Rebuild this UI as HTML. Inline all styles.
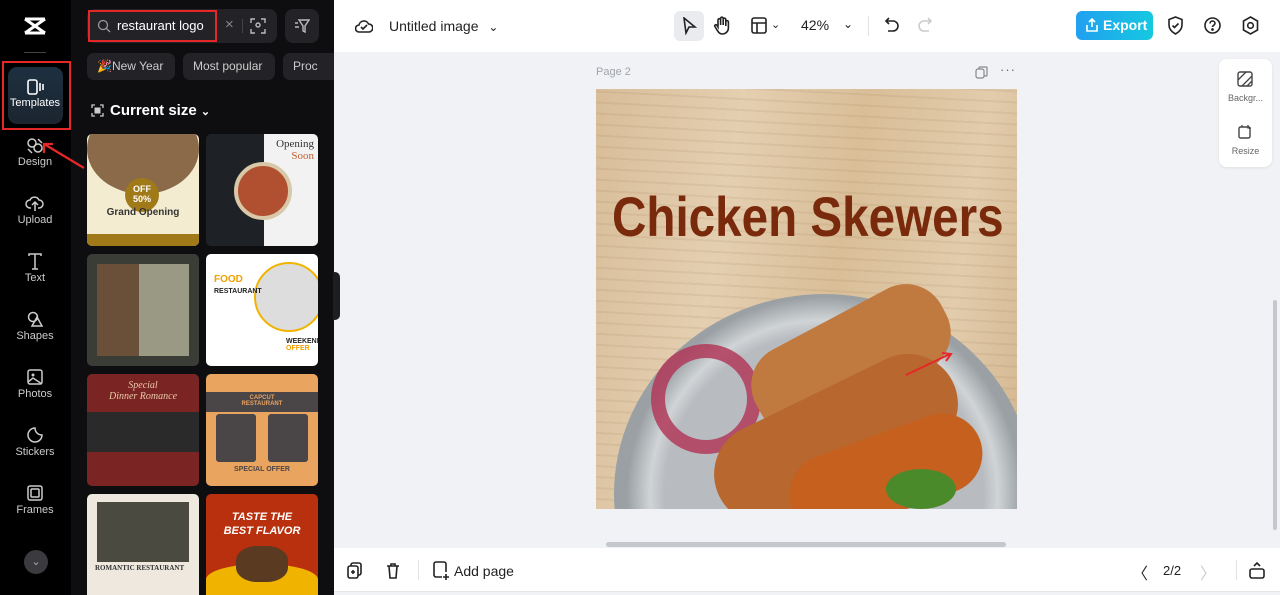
<!DOCTYPE html>
<html><head><meta charset="utf-8"><style>
*{margin:0;padding:0;box-sizing:border-box}
html,body{width:1280px;height:595px;overflow:hidden}
body{font-family:"Liberation Sans",sans-serif;background:#f0f2f5;position:relative}
.abs{position:absolute}
.side{left:0;top:0;width:71px;height:595px;background:#000}
.nav{position:absolute;left:0;width:70px;text-align:center;color:#ccc;font-size:11px}
.nav svg{display:block;margin:0 auto 2px}
.panel{left:71px;top:0;width:263px;height:595px;background:#0e0e10}
.chip{position:absolute;top:53px;height:27px;border-radius:7px;background:#232327;color:#ccc;font-size:12px;line-height:27px;padding:0 10px;white-space:nowrap;overflow:hidden}
.tpl{position:absolute;width:112px;height:112px;border-radius:5px;overflow:hidden}
.ico{position:absolute;stroke:#222;fill:none;stroke-width:1.6}
</style></head><body>
<div class="abs side"></div>
<svg class="abs" style="left:23px;top:17px" width="24" height="18" viewBox="0 0 24 18"><path d="M2 2l20 14M22 2L2 16M2 2h20M2 16h20" stroke="#fff" stroke-width="3" fill="none" stroke-linejoin="round"/></svg>
<div class="abs" style="left:24px;top:52px;width:22px;height:1px;background:#444"></div>
<div class="abs" style="left:2px;top:61px;width:69px;height:69px;border:2px solid #e52727"></div>
<div class="abs" style="left:8px;top:67px;width:55px;height:57px;border-radius:9px;background:linear-gradient(#1d3040,#1c2530)"></div>
<div class="nav" style="top:79px;color:#fff;font-size:11px"><svg width="18" height="16" viewBox="0 0 18 16"><rect x="2" y="1" width="9" height="14" rx="2" stroke="#fff" stroke-width="1.6" fill="none"/><path d="M14 4v8M17 5v6" stroke="#fff" stroke-width="1.6"/></svg>Templates</div>
<div class="nav" style="top:137px"><svg width="18" height="17" viewBox="0 0 18 17"><circle cx="6" cy="6" r="4" stroke="#ccc" stroke-width="1.5" fill="none"/><circle cx="12" cy="11" r="4" stroke="#ccc" stroke-width="1.5" fill="none"/><path d="M12 2l4 4M2 12l4 4" stroke="#ccc" stroke-width="1.5"/></svg>Design</div>
<div class="nav" style="top:195px"><svg width="20" height="17" viewBox="0 0 20 17"><path d="M6 13H5a4 4 0 010-8 5 5 0 019 0 4 4 0 010 8h-1M10 16V8M7 10l3-3 3 3" stroke="#ccc" stroke-width="1.5" fill="none"/></svg>Upload</div>
<div class="nav" style="top:253px"><svg width="18" height="17" viewBox="0 0 18 17"><path d="M3 3V1h12v2M9 1v15M6 16h6" stroke="#ccc" stroke-width="1.5" fill="none"/></svg>Text</div>
<div class="nav" style="top:311px"><svg width="18" height="17" viewBox="0 0 18 17"><circle cx="7" cy="6" r="4.5" stroke="#ccc" stroke-width="1.5" fill="none"/><path d="M11 6l5 9H6z" stroke="#ccc" stroke-width="1.5" fill="none"/></svg>Shapes</div>
<div class="nav" style="top:369px"><svg width="18" height="17" viewBox="0 0 18 17"><rect x="2" y="1" width="14" height="14" rx="2" stroke="#ccc" stroke-width="1.5" fill="none"/><circle cx="7" cy="6" r="1.5" fill="#ccc"/><path d="M2 13l5-4 9 6" stroke="#ccc" stroke-width="1.5" fill="none"/></svg>Photos</div>
<div class="nav" style="top:427px"><svg width="18" height="17" viewBox="0 0 18 17"><path d="M9 1a7 7 0 107 7c-4 0-7-3-7-7z" stroke="#ccc" stroke-width="1.5" fill="none"/></svg>Stickers</div>
<div class="nav" style="top:485px"><svg width="18" height="17" viewBox="0 0 18 17"><rect x="2" y="1" width="14" height="14" rx="2" stroke="#ccc" stroke-width="1.5" fill="none"/><rect x="5" y="4" width="8" height="8" rx="1" stroke="#ccc" stroke-width="1.5" fill="none"/></svg>Frames</div>
<div class="abs" style="left:24px;top:550px;width:24px;height:24px;border-radius:50%;background:#3a3a3f;color:#aaa;font-size:11px;text-align:center;line-height:24px">⌄</div>

<div class="abs panel"></div>
<div class="abs" style="left:87px;top:9px;width:190px;height:34px;border-radius:8px;background:#232327"></div>
<div class="abs" style="left:88px;top:10px;width:129px;height:32px;border:2px solid #e52727"></div>
<svg class="abs" style="left:97px;top:19px" width="14" height="14" viewBox="0 0 14 14"><circle cx="6" cy="6" r="4.5" stroke="#999" stroke-width="1.3" fill="none"/><path d="M9.5 9.5L13 13" stroke="#999" stroke-width="1.3"/></svg>
<div class="abs" style="left:117px;top:18px;color:#fff;font-size:13px;white-space:nowrap">restaurant logo</div>
<div class="abs" style="left:225px;top:16px;color:#888;font-size:15px">×</div>
<div class="abs" style="left:242px;top:19px;width:1px;height:14px;background:#444"></div>
<svg class="abs" style="left:250px;top:18px" width="16" height="16" viewBox="0 0 16 16"><path d="M1 5V1h4M11 1h4v4M15 11v4h-4M5 15H1v-4" stroke="#bbb" stroke-width="1.4" fill="none"/><circle cx="8" cy="7" r="2" stroke="#bbb" stroke-width="1.4" fill="none"/></svg>
<div class="abs" style="left:285px;top:9px;width:34px;height:34px;border-radius:8px;background:#232327"></div>
<svg class="abs" style="left:294px;top:18px" width="16" height="16" viewBox="0 0 16 16"><path d="M5 2h10l-4 6v6l-2-1V8z" stroke="#bbb" stroke-width="1.4" fill="none"/><path d="M1 5h3M1 9h4" stroke="#bbb" stroke-width="1.4"/></svg>
<div class="chip" style="left:87px;width:88px">🎉New Year</div>
<div class="chip" style="left:183px;width:92px">Most popular</div>
<div class="chip" style="left:283px;width:51px;border-radius:7px 0 0 7px">Proc</div>
<svg class="abs" style="left:91px;top:104px" width="13" height="13" viewBox="0 0 13 13"><path d="M1 4V1h3M9 1h3v3M12 9v3H9M4 12H1V9" stroke="#ccc" stroke-width="1.3" fill="none"/><rect x="3.5" y="3.5" width="6" height="6" fill="#ccc"/></svg>
<div class="abs" style="left:110px;top:102px;color:#fff;font-size:15px;font-weight:bold;white-space:nowrap">Current size <span style="font-size:11px">⌄</span></div>

<div class="tpl" style="left:87px;top:134px;background:#f3ecd0"><div style="position:absolute;left:0;top:-30px;width:112px;height:90px;border-radius:50%;background:#8a6a48"></div><div style="position:absolute;left:38px;top:44px;width:34px;height:34px;border-radius:50%;background:#a07a18;color:#fff;font-size:9px;font-weight:bold;text-align:center;padding-top:6px">OFF<br>50%</div><div style="position:absolute;left:0;top:73px;width:112px;text-align:center;font-size:10px;font-weight:bold;color:#333">Grand Opening</div><div style="position:absolute;left:0;bottom:0;width:112px;height:12px;background:#a07a18"></div></div>
<div class="tpl" style="left:206px;top:134px;background:#1e2226"><div style="position:absolute;right:0;top:0;width:54px;height:112px;background:#f2f2f2"></div><div style="position:absolute;right:4px;top:4px;font-family:'Liberation Serif';font-size:11px;color:#333;text-align:right">Opening<br><span style="color:#c06030">Soon</span></div><div style="position:absolute;left:28px;top:28px;width:58px;height:58px;border-radius:50%;background:#b05030;border:4px solid #d8c8a8"></div></div>
<div class="tpl" style="left:87px;top:254px;background:#3a3d36"><div style="position:absolute;left:10px;top:10px;width:42px;height:92px;background:#6a5038"></div><div style="position:absolute;left:52px;top:10px;width:50px;height:92px;background:#9a9a84"></div></div>
<div class="tpl" style="left:206px;top:254px;background:#fff"><div style="position:absolute;left:48px;top:8px;width:70px;height:70px;border-radius:50%;background:#ddd;border:2px solid #f0b400"></div><div style="position:absolute;left:8px;top:20px;font-size:10px;font-weight:bold;color:#f0a000">FOOD<br><span style="color:#222;font-size:7px">RESTAURANT</span></div><div style="position:absolute;left:80px;top:84px;font-size:7px;font-weight:bold;color:#222">WEEKEND<br><span style="color:#f0a000">OFFER</span></div></div>
<div class="tpl" style="left:87px;top:374px;background:#7a2424"><div style="position:absolute;left:0;top:38px;width:112px;height:40px;background:#2a2a2a"></div><div style="position:absolute;left:0;top:6px;width:112px;text-align:center;font-family:'Liberation Serif';font-style:italic;color:#e9c9a8;font-size:10px">Special<br>Dinner Romance</div></div>
<div class="tpl" style="left:206px;top:374px;background:#e9a460"><div style="position:absolute;left:0;top:18px;width:112px;height:20px;background:#4a4546;color:#e9a460;font-size:6px;font-weight:bold;text-align:center;padding-top:3px">CAPCUT<br>RESTAURANT</div><div style="position:absolute;left:10px;top:40px;width:40px;height:48px;background:#4a4546;border-radius:3px"></div><div style="position:absolute;left:62px;top:40px;width:40px;height:48px;background:#4a4546;border-radius:3px"></div><div style="position:absolute;left:0;top:92px;width:112px;text-align:center;font-size:7px;font-weight:bold;color:#4a4546">SPECIAL OFFER</div></div>
<div class="tpl" style="left:87px;top:494px;background:#eee8de;height:101px;border-radius:5px 5px 0 0"><div style="position:absolute;left:10px;top:8px;width:92px;height:60px;background:#4a4a40"></div><div style="position:absolute;left:8px;top:70px;font-family:'Liberation Serif';font-size:7px;font-weight:bold;color:#333;white-space:nowrap">ROMANTIC RESTAURANT</div></div>
<div class="tpl" style="left:206px;top:494px;background:#b8300e;height:101px;border-radius:5px 5px 0 0"><div style="position:absolute;left:0;top:16px;width:112px;text-align:center;font-style:italic;font-weight:bold;font-size:11px;color:#fff;line-height:14px">TASTE THE<br>BEST FLAVOR</div><div style="position:absolute;left:0;top:70px;width:112px;height:31px;background:#f0b400;border-radius:50% 50% 0 0"></div><div style="position:absolute;left:30px;top:52px;width:52px;height:36px;border-radius:40%;background:#5a3a20"></div></div>
<div class="abs" style="left:333px;top:272px;width:7px;height:48px;background:#1e1e22;border-radius:0 5px 5px 0"></div>

<!-- topbar -->
<div class="abs" style="left:334px;top:0;width:946px;height:52px;background:#fff"></div>
<svg class="abs ico" style="left:355px;top:17px" width="18" height="17" viewBox="0 0 18 17"><path d="M5 15H4a3.5 3.5 0 010-7 5 5 0 019.5-1A4 4 0 0114 15H5z"/><path d="M6 10l2 2 4-4"/></svg>
<div class="abs" style="left:389px;top:18px;font-size:14px;color:#222;white-space:nowrap">Untitled image <span style="font-size:12px;margin-left:6px">⌄</span></div>
<div class="abs" style="left:674px;top:11px;width:30px;height:30px;border-radius:6px;background:#e9ebee"></div>
<svg class="abs ico" style="left:682px;top:17px" width="15" height="18" viewBox="0 0 15 18"><path d="M2 1l11 9H7l-3 6z"/></svg>
<svg class="abs ico" style="left:713px;top:16px" width="18" height="19" viewBox="0 0 18 19"><path d="M5 11V4a1.3 1.3 0 012.6 0v5V2.5a1.3 1.3 0 012.6 0V9V3.5a1.3 1.3 0 012.6 0V10V6a1.3 1.3 0 012.6 0v6a6 6 0 01-6 6c-3 0-4-2-6-5l-1.5-2.5a1.2 1.2 0 012-1.3z"/></svg>
<svg class="abs ico" style="left:751px;top:17px" width="16" height="17" viewBox="0 0 16 17"><rect x="1" y="1" width="14" height="15" rx="2"/><path d="M1 6h14M6 6v10"/></svg>
<div class="abs" style="left:771px;top:18px;font-size:11px;color:#222">⌄</div>
<div class="abs" style="left:801px;top:17px;font-size:14px;color:#222">42%</div>
<div class="abs" style="left:843px;top:17px;font-size:12px;color:#222">⌄</div>
<div class="abs" style="left:868px;top:16px;width:1px;height:20px;background:#e3e3e3"></div>
<svg class="abs ico" style="left:884px;top:17px" width="16" height="17" viewBox="0 0 16 17"><path d="M5 1L2 4l3 3M2 4h7a5 5 0 010 10H4"/></svg>
<svg class="abs ico" style="left:917px;top:17px;stroke:#ccc" width="16" height="17" viewBox="0 0 16 17"><path d="M11 1l3 3-3 3M14 4H7a5 5 0 000 10h5"/></svg>
<div class="abs" style="left:1076px;top:11px;width:77px;height:29px;border-radius:6px;background:linear-gradient(90deg,#21a0f0,#16c8e0);color:#fff;font-size:14px;font-weight:bold;line-height:29px;padding-left:27px">Export</div>
<svg class="abs" style="left:1086px;top:18px" width="12" height="14" viewBox="0 0 12 14"><path d="M6 9V1M3 4l3-3 3 3M1 7v6h10V7" stroke="#fff" stroke-width="1.6" fill="none"/></svg>
<svg class="abs ico" style="left:1167px;top:16px" width="17" height="19" viewBox="0 0 17 19"><path d="M8.5 1L15 3.5V9c0 4-3 7-6.5 9C5 16 2 13 2 9V3.5z"/><path d="M5.5 9.5l2 2 4-4"/></svg>
<svg class="abs ico" style="left:1204px;top:17px" width="17" height="17" viewBox="0 0 17 17"><circle cx="8.5" cy="8.5" r="7.5"/><path d="M6 6.5a2.5 2.5 0 115 0c0 1.5-2.5 2-2.5 3.5"/><circle cx="8.5" cy="12.5" r=".6" fill="#222"/></svg>
<svg class="abs ico" style="left:1242px;top:16px" width="17" height="19" viewBox="0 0 17 19"><path d="M8.5 1l7 4v9l-7 4-7-4V5z"/><circle cx="8.5" cy="9.5" r="2.8"/></svg>

<!-- canvas -->
<div class="abs" style="left:596px;top:66px;font-size:11px;color:#a0a4aa">Page 2</div>
<svg class="abs" style="left:975px;top:66px" width="13" height="13" viewBox="0 0 13 13"><rect x="1" y="3" width="8" height="9" rx="2" stroke="#888" stroke-width="1.2" fill="none"/><path d="M4 3V2a1 1 0 011-1h6a1 1 0 011 1v7a1 1 0 01-1 1h-2" stroke="#888" stroke-width="1.2" fill="none"/></svg>
<div class="abs" style="left:1000px;top:62px;font-size:13px;color:#666;letter-spacing:1px">···</div>
<div class="abs" style="left:596px;top:89px;width:421px;height:420px;overflow:hidden;background:linear-gradient(100deg,#d8bd99 0%,#e4cfb1 30%,#d9be98 55%,#e2ccac 80%,#d3b690 100%)">
 <div style="position:absolute;left:0;top:0;width:100%;height:100%;background:repeating-linear-gradient(3deg,rgba(140,100,60,0) 0 9px,rgba(140,100,60,.1) 9px 11px)"></div>
 <div style="position:absolute;left:16px;top:98px;width:392px;height:60px;white-space:nowrap;font-family:'Liberation Sans',sans-serif;font-weight:bold;font-size:56px;line-height:60px;color:#7a2a0c;transform-origin:0 0;transform:scaleX(0.85)">Chicken Skewers</div>
 <div style="position:absolute;left:18px;top:205px;width:420px;height:400px;border-radius:50%;background:radial-gradient(circle,#b8bcc0 0 55%,#d0d4d6 60%,#9aa0a4 68%)"></div>
 <div style="position:absolute;left:55px;top:255px;width:110px;height:110px;border-radius:50%;border:14px solid #b03a5a;opacity:.85"></div>
 <div style="position:absolute;left:150px;top:225px;width:210px;height:90px;background:#c07a40;border-radius:40px;transform:rotate(-28deg)"></div>
 <div style="position:absolute;left:110px;top:300px;width:260px;height:100px;background:#b8682e;border-radius:50px;transform:rotate(-26deg)"></div>
 <div style="position:absolute;left:190px;top:345px;width:200px;height:80px;background:#c5601f;border-radius:40px;transform:rotate(-20deg)"></div>
 <div style="position:absolute;left:290px;top:380px;width:70px;height:40px;background:#4a8a2a;border-radius:50%"></div>
</div>
<svg class="abs" style="left:904px;top:350px" width="50" height="28" viewBox="0 0 50 28"><path d="M2 25L46 4M38 3l9 1-5 7" stroke="#e52727" stroke-width="2" fill="none"/></svg>
<svg class="abs" style="left:40px;top:140px" width="46" height="30" viewBox="0 0 46 30"><path d="M44 28L4 4M4 13l0-9 9 0" stroke="#e52727" stroke-width="2.2" fill="none"/></svg>
<div class="abs" style="left:606px;top:542px;width:400px;height:5px;border-radius:3px;background:#c4c8cc"></div>
<div class="abs" style="left:1273px;top:300px;width:4px;height:230px;border-radius:2px;background:#c4c8cc"></div>
<div class="abs" style="left:1219px;top:59px;width:53px;height:108px;border-radius:8px;background:#fff;box-shadow:0 1px 3px rgba(0,0,0,.08)"></div>
<svg class="abs" style="left:1237px;top:71px" width="16" height="16" viewBox="0 0 16 16"><rect x="1" y="1" width="14" height="14" rx="2" stroke="#444" stroke-width="1.4" fill="none"/><path d="M1 9L9 1M5 15L15 5M10 15l5-5" stroke="#444" stroke-width="1.3"/></svg>
<div class="abs" style="left:1219px;top:93px;width:53px;text-align:center;font-size:9px;color:#666">Backgr...</div>
<svg class="abs" style="left:1237px;top:124px" width="16" height="16" viewBox="0 0 16 16"><rect x="2" y="3" width="11" height="11" rx="1.5" stroke="#444" stroke-width="1.4" fill="none"/><path d="M11 1v3h3M5 1v2" stroke="#444" stroke-width="1.3" fill="none"/></svg>
<div class="abs" style="left:1219px;top:146px;width:53px;text-align:center;font-size:9px;color:#666">Resize</div>

<!-- bottom bar -->
<div class="abs" style="left:334px;top:548px;width:946px;height:44px;background:#fff;border-bottom:1px solid #e5e5e5"></div>
<svg class="abs ico" style="left:347px;top:562px" width="16" height="17" viewBox="0 0 16 17"><rect x="1" y="4" width="10" height="12" rx="2"/><path d="M4 4V3a2 2 0 012-2h6a2 2 0 012 2v8a2 2 0 01-2 2h-1M6 8v4M4 10h4"/></svg>
<svg class="abs ico" style="left:386px;top:562px" width="14" height="17" viewBox="0 0 14 17"><path d="M1 4h12M5 4V2h4v2M3 4l1 12h6l1-12"/></svg>
<div class="abs" style="left:418px;top:560px;width:1px;height:20px;background:#e3e3e3"></div>
<svg class="abs ico" style="left:433px;top:561px" width="17" height="19" viewBox="0 0 17 19"><path d="M9 16H3a2 2 0 01-2-2V3a2 2 0 012-2h8a2 2 0 012 2v8M13 13v6M10 16h6"/></svg>
<div class="abs" style="left:454px;top:563px;font-size:14px;color:#222">Add page</div>
<div class="abs" style="left:1132px;top:560px;font-size:16px;color:#222">〈</div>
<div class="abs" style="left:1163px;top:563px;font-size:13px;color:#222">2/2</div>
<div class="abs" style="left:1200px;top:560px;font-size:16px;color:#ccc">〉</div>
<div class="abs" style="left:1236px;top:560px;width:1px;height:20px;background:#e3e3e3"></div>
<svg class="abs ico" style="left:1249px;top:561px" width="16" height="18" viewBox="0 0 16 18"><rect x="1" y="8" width="14" height="9" rx="2"/><path d="M5 5l3-3 3 3"/></svg>
</body></html>
